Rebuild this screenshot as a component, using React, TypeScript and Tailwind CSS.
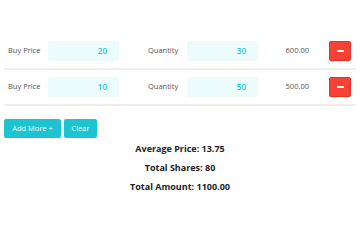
import React, { useState } from 'react';

interface Row {
  id: number;
  price: number;
  qty: number;
}

export default function App() {
  const [rows, setRows] = useState<Row[]>([
    { id: 1, price: 20, qty: 30 },
    { id: 2, price: 10, qty: 50 },
  ]);

  const totalShares = rows.reduce((s, r) => s + r.qty, 0);
  const totalAmount = rows.reduce((s, r) => s + r.price * r.qty, 0);
  const avg = totalShares ? totalAmount / totalShares : 0;

  return (
    <div className="w-[360px] h-[234px] bg-white px-1 pt-[34px] text-[#555] font-['Open_Sans',sans-serif]">
      {rows.map((row) => (
        <div key={row.id} className="flex items-center h-[36px] pl-1 border-b-2 border-[#eeeeee]">
          <span className="w-[40px] text-[7.5px]">Buy Price</span>
          <div className="w-[71px] h-[20px] bg-[#ecfcfd] rounded-[2px] flex items-center justify-end pr-[12px] text-[8px] font-semibold text-[#1cc4cf]">
            {row.price}
          </div>
          <span className="w-[29px]" />
          <span className="w-[39px] text-[7.5px]">Quantity</span>
          <div className="w-[71px] h-[20px] bg-[#ecfcfd] rounded-[2px] flex items-center justify-end pr-[12px] text-[8px] font-semibold text-[#1cc4cf]">
            {row.qty}
          </div>
          <span className="w-[51px] text-right text-[7.5px]">{(row.price * row.qty).toFixed(2)}</span>
          <button
            onClick={() => setRows(rows.filter((r) => r.id !== row.id))}
            className="ml-[20px] w-[22px] h-[20px] bg-[#f44336] border border-[#e53125] rounded-[2px] flex items-center justify-center"
          >
            <span className="block w-[7px] h-[2px] bg-white/90" />
          </button>
        </div>
      ))}

      <div className="flex gap-[3px] mt-[13px]">
        <button className="w-[57px] h-[19px] rounded-[2px] bg-[#1cc4d1] text-white text-[7.5px]">Add More +</button>
        <button className="w-[33px] h-[19px] rounded-[2px] bg-[#1cc4d1] text-white text-[7.5px]">Clear</button>
      </div>

      <div className="mt-[1px] flex flex-col items-center text-[#222] font-bold text-[9px] leading-[19px]">
        <span>Average Price: {avg.toFixed(2)}</span>
        <span>Total Shares: {totalShares}</span>
        <span>Total Amount: {totalAmount.toFixed(2)}</span>
      </div>
    </div>
  );
}
